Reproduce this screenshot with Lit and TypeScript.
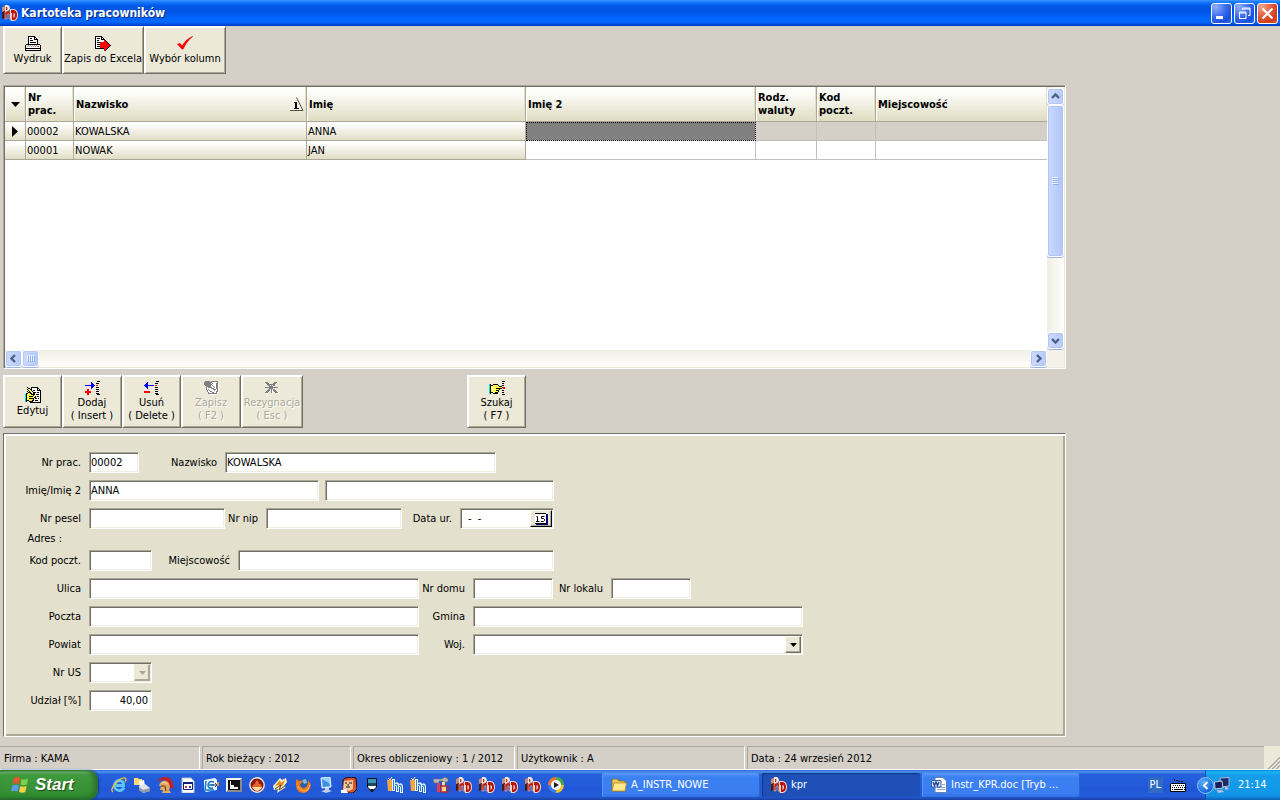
import { LitElement, html, svg, css, TemplateResult } from "lit";
import { customElement } from "lit/decorators.js";
import { classMap } from "lit/directives/class-map.js";

const PALETTE: Record<string, string> = {
  k: "#000000",
  w: "#ffffff",
  r: "#ff0000",
  b: "#0000ff",
  y: "#ffff4a",
  c: "#00e5e5",
  g: "#9c9a8f",
  d: "#808080",
  n: "#000080",
};

/** Turns rows of characters into a crisp bitmap icon; a dot is transparent. */
function bitmap(rows: string[]): TemplateResult {
  const width = Math.max(...rows.map((r) => r.length));
  const cells: unknown[] = [];
  rows.forEach((row, y) => {
    let x = 0;
    while (x < row.length) {
      const ch = row[x];
      let end = x + 1;
      while (end < row.length && row[end] === ch) end++;
      if (PALETTE[ch]) {
        cells.push(svg`<rect x=${x} y=${y} width=${end - x} height="1" fill=${PALETTE[ch]}></rect>`);
      }
      x = end;
    }
  });
  return html`<svg width=${width} height=${rows.length} viewBox="0 0 ${width} ${rows.length}"
    shape-rendering="crispEdges" aria-hidden="true">${cells}</svg>`;
}

const printer = bitmap([
  "...kkkkkkk......",
  "...kwwwwwkk.....",
  "...kwkkwwkwk....",
  "...kwwwwwkkkk...",
  "...kwkkkwwwwk...",
  "...kwwwwwwwwk...",
  "...kwkkkkkkwk...",
  "...kwwwwwwwwk...",
  ".kkkkkkkkkkkkkk.",
  "kwwgwgwgwgwgwwwk",
  "kwgwgwgwgwgwgrwk",
  "kwwwwwwwwwwwwwwk",
  "kkkkkkkkkkkkkkkk",
  "kwwwwwwwwwwwwwwk",
  "kkkkkkkkkkkkkkkk",
]);

const exportIcon = bitmap([
  "kkkkkkk.........",
  "kwwwwwkk........",
  "kwkkkwkwk.......",
  "kwwwwwkkkk......",
  "kwkkwwwwwrk.....",
  "kwwwwwwwwrrk....",
  "kwkkkrrrrrrrk...",
  "kwwwwrrrrrrrrk..",
  "kwkkkrrrrrrrrrk.",
  "kwwwwrrrrrrrrrrk",
  "kwkkkrrrrrrrrrk.",
  "kwwwwrrrrrrrrk..",
  "kkkkkkkkkrrrk...",
  ".........rrk....",
  ".........rk.....",
]);

const check = html`<svg width="16" height="15" viewBox="0 0 16 15" aria-hidden="true">
  <path d="M0 8L3 7L5 9.500Q9 3 15.500 0L16 .500Q10 5 6.500 13L5 13.500Z" fill="#f00"></path>
</svg>`;

const edit = bitmap([
  "..k...kkkkkkk...",
  "...kk.kwwwwwkk..",
  "..kyykkwwwwwkwk.",
  "...kyykwkkwwkkkk",
  "..k.kyykwwwwwwwk",
  "...kkkyykkkwkkwk",
  ".kkyykkykkwwwwwk",
  "ckyyyykkkkwkkkwk",
  "ckyyyyyykywwwwwk",
  "ckyykkkkyykwkkwk",
  "ckyyyyyyykkwwwwk",
  "ckyykkkkkwkkwkwk",
  "ckyyyyyykwwwwwwk",
  "ckkkyyykkwkkkwwk",
  "ck..kkkkwwwwwwwk",
  ".....kkkkkkkkkkk",
]);

const add = bitmap([
  "............kkk",
  "......b........",
  "......bb...kkk.",
  "......bbb......",
  "bbbbbbbbbb.rr..",
  "......bbb......",
  "......bb...kkk.",
  "......b........",
  "..rr.......kkk.",
  "..rr...........",
  "rrrrrr.....kkk.",
  "rrrrrr.........",
  "..rr.......kkk.",
  "..rr........kkk",
]);

const remove = bitmap([
  "............kkk",
  "...b...........",
  "..bb.......kkk.",
  ".bbb...........",
  "bbbbbbbbbb.rr..",
  ".bbb...........",
  "..bb.......kkk.",
  "...b...........",
  "...........kkk.",
  "...............",
  "rrrrrr.....kkk.",
  "rrrrrr.........",
  "...........kkk.",
  "............kkk",
]);

const save = bitmap([
  ".ddddd.ddddddd.",
  "ddddddddwwwwwdw",
  "dddddddwdwwwddw",
  "ddddddddwwwwddw",
  ".ddddddwdwwwddw",
  "..dddddwwdwwddw",
  "..dwddddwwdwddw",
  "..dwwwwdddwwddw",
  "..dwdwwwwdddwdw",
  "...dwdwwwwdwwdw",
  "...dwwddwwwwddw",
  "....dwwwddwwdww",
  "....dddddddddw.",
  ".....wwwwwwww..",
]);

const cancel = bitmap([
  "..............",
  "dddw.....dddw.",
  ".dddw...dddw..",
  "..ddddddddw...",
  "...dd.d.ddw...",
  "....ddddw.....",
  "dddddddddddddw",
  "....ddddw.....",
  "...dd.d.ddw...",
  "..dddwdwdddw..",
  ".dddw.dw.dddw.",
  "dddw..dw..dddw",
  ".ww....w...ww.",
  "..............",
]);

const search = bitmap([
  ".............kkk",
  "................",
  ".............kk.",
  "ck..kkkkk.......",
  "ckkkyyyyyk...kk.",
  "ckyyyyyyyykkk...",
  "ckyywyyyyyyyykrr",
  "ckywyyykkkkkk.rr",
  "ckyywyyyyyk.....",
  "ckywyyykkk...kk.",
  "ckyyyyyyyk......",
  "ckkkyykkk....kk.",
  "ck..kkkkk.......",
  ".............kkk",
]);

const calendar = html`<svg width="13" height="12" viewBox="0 0 13 12" aria-hidden="true">
  <path d="M0 0H12V11H0Z" fill="#fff"></path>
  <path d="M0 .5H11M0 10.500H11" stroke="#000" fill="none"></path>
  <path d="M11 1H13V12H1V11H11Z" fill="#000080"></path>
  <path d="M1.500 3.500H2.500V8.500M1 8.500H4.500M9.500 3.500H6.500V5.500H8.500L9.500 6.500V7.500L8.500 8.500H6" fill="none" stroke="#000"></path>
</svg>`;

const sortMark = html`<svg width="15" height="15" viewBox="0 0 15 15" aria-hidden="true">
  <path d="M1 13L7 1L8 1L14 13Z" fill="#f2f0e4"></path>
  <path d="M1 12.500L7 .5" stroke="#fff" fill="none"></path>
  <path d="M7.500 .5L14 13.500H1" stroke="#55534a" fill="none"></path>
  <path d="M5 5.500H8M5 11.500H10" stroke="#000" fill="none"></path><path d="M7 5V11" stroke="#000" stroke-width="2"></path>
</svg>`;

const app = html`<svg width="16" height="16" viewBox="0 0 16 16" aria-hidden="true">
  <path d="M0 2L3 1V12L0 13Z" fill="#c98f80"></path>
  <path d="M0 7L3 6V13L0 14Z" fill="#4d1712"></path>
  <path d="M3 0H6Q8 1 8 4L5 7H3Z" fill="#f8e8e2"></path>
  <path d="M4 2H5Q6 3 5 5H4Z" fill="#a82c20"></path>
  <path d="M3 7Q7 4 9 7V14H7V9Q6 8 5 10V14H3Z" fill="#b8241a" stroke="#efc8bc" stroke-width=".6"></path>
  <path d="M8 4H12Q16 5 16 10Q16 15 12 16H9L8 13V8Z" fill="#f3d4ca"></path>
  <path d="M9 5H12Q15 6 15 10Q15 14 12 15H10V8H9Z" fill="#b5150c"></path>
  <path d="M11.500 8Q13 8 13 10Q13 12.500 11.500 13Z" fill="#f6e2da"></path>
</svg>`;

const jar = html`<svg width="16" height="16" viewBox="0 0 16 16" aria-hidden="true">
  <path d="M0 3H6V14H1Z" fill="#f0a541"></path><path d="M1 1L3 3L5 0" stroke="#ffe0a0" fill="none"></path>
  <path d="M5 2H8V6Q11 4 12 7Q15 5 16 9V16H13V10L12 10V15H9V9L8 9V14H5Z" fill="#e8f4ff"></path>
  <path d="M6 3H7V13H6ZM8 7Q11 6 11 9V14H10V9Q9 8 8 8ZM12 8Q15 7 15 10V15H14V10Q13 9 12 9Z" fill="#2d83cc"></path>
</svg>`;

const ie = html`<svg width="16" height="16" viewBox="0 0 16 16" aria-hidden="true">
  <path d="M13 10.500Q11 14 7.500 13.500Q3 12.500 3.500 8Q4.500 3.500 8.500 3.500Q13 4 12.500 8.500H5" fill="none" stroke="#5cc4ff" stroke-width="2.800"></path>
  <path d="M2 15Q-1 13 4 7Q10 0 14 1Q16 2 14 5" fill="none" stroke="#f6c23a" stroke-width="1.300"></path>
</svg>`;

const outlookPrint = html`<svg width="16" height="16" viewBox="0 0 16 16" aria-hidden="true">
  <path d="M0 1H4L5 2H8V8H0Z" fill="#f9d978"></path><path d="M5 4L10 3L11 9L6 10Z" fill="#fff"></path>
  <path d="M5 9L11 7L16 11V14L9 16L5 13Z" fill="#dfe3ea"></path><path d="M5 10L9 13L16 11V14L9 16L5 13Z" fill="#8e98ab"></path>
</svg>`;

const helmet = html`<svg width="16" height="16" viewBox="0 0 16 16" aria-hidden="true">
  <path d="M0 4Q3 0 9 0Q15 1 16 7V12L12 10Q12 4 7 3Z" fill="#c8201c"></path>
  <path d="M3 6Q7 2 11 5Q14 9 12 13L14 16H5L6 13L3 13L4 9L2 9Z" fill="#e0a860"></path>
  <path d="M4 9H8L9 14" fill="none" stroke="#6a2f12"></path><path d="M5 6Q8 4 10 7" fill="none" stroke="#ffe2a8"></path>
</svg>`;

const calendarPage = html`<svg width="16" height="16" viewBox="0 0 16 16" aria-hidden="true">
  <path d="M2 1H11L14 4V16H2Z" fill="#fff" stroke="#b9bfc9"></path>
  <path d="M3.500 5.500H12.500V12.500H3.500Z" fill="#fff" stroke="#10207c"></path><path d="M3 5H13V7H3Z" fill="#10207c"></path>
  <path d="M5 9H7V11H5Z" fill="#d33"></path><path d="M9 9H11V11H9Z" fill="#33b"></path>
</svg>`;

const mailIcon = html`<svg width="16" height="16" viewBox="0 0 16 16" aria-hidden="true">
  <path d="M1 3L12 1L14 3V13L3 15L1 13Z" fill="#e8f7ff"></path>
  <path d="M11 5Q6 3 5 8Q5 12 10 11M6 8H11M3 4L2 13L11 13" fill="none" stroke="#1577c9" stroke-width="1.500"></path>
  <path d="M8 8H14L12 6M14 8L12 10" fill="none" stroke="#274a8c"></path><path d="M14 5H16V9H14Z" fill="#e78e3a"></path>
</svg>`;

const blackSquare = html`<svg width="16" height="16" viewBox="0 0 16 16" aria-hidden="true">
  <path d="M0 1H16V15H0Z" fill="#8a8a8a"></path><path d="M0 1H16L14 3H2V13L0 15Z" fill="#f4f4f4"></path>
  <path d="M2 3H14V13H2Z" fill="#101010"></path>
  <path d="M4 4H12V12H4Z" fill="#f4f4f4"></path><path d="M5 4H12V10H8V8H5Z" fill="#111"></path>
</svg>`;

const flame = html`<svg width="16" height="16" viewBox="0 0 16 16" aria-hidden="true">
  <circle cx="8" cy="8" r="7.200" fill="#8a1a1a" stroke="#f3e6e0" stroke-width="1.400"></circle>
  <path d="M3 10Q4 7 6 7Q6 5 8 3Q10 5 10 7Q12 6 13 10Q8 14 3 10Z" fill="#e8662a"></path>
  <path d="M3 10H13Q12 13 8 14Q4 13 3 10Z" fill="#ffd9a0"></path>
</svg>`;

const bolt = html`<svg width="16" height="16" viewBox="0 0 16 16" aria-hidden="true">
  <path d="M1 9L8 1L10 3L14 1L15 5L12 9L14 10L5 16L6 12L2 13Z" fill="#ffeebd"></path>
  <path d="M3 9L8 3L9 6L13 3L11 8L8 10L7 8Z" fill="#e88418"></path>
  <path d="M3 12L9 8L7 13L13 9" fill="none" stroke="#60401c"></path>
</svg>`;

const firefox = html`<svg width="16" height="16" viewBox="0 0 16 16" aria-hidden="true">
  <circle cx="9" cy="7" r="6" fill="#2c5ea8"></circle><path d="M7 3L11 2L12 6L9 7Z" fill="#7db8e8"></path>
  <path d="M1 2L4 4Q6 3 8 5L5 7Q5 11 9 11Q13 11 13 3Q17 7 15 11Q13 16 8 16Q1 15 1 8Z" fill="#ee7a1c"></path>
  <path d="M3 9Q5 14 10 14Q14 13 15 8" fill="none" stroke="#ffc04a"></path>
</svg>`;

const monitor = html`<svg width="16" height="16" viewBox="0 0 16 16" aria-hidden="true">
  <path d="M3 1L12 0L13 10L4 11Z" fill="#8fd2ff" stroke="#e2f1fb"></path>
  <path d="M4 2L11 6L12 9L5 10Z" fill="#3e8ee2"></path><path d="M7 11H11V13L14 14L8 16L3 14L7 13Z" fill="#c9cfe2"></path>
</svg>`;

const face = html`<svg width="16" height="16" viewBox="0 0 16 16" aria-hidden="true">
  <path d="M2 3Q5 -1 15 1L16 12L12 16H0L2 12Z" fill="#d8522a" stroke="#1a0d08"></path>
  <path d="M3 4L12 3L12 12L8 14L2 12Z" fill="#f4c69c"></path>
  <path d="M4 6H6M8 6H11M5 10H9M7 7V9" stroke="#111"></path>
  <path d="M0 13L5 12L7 16H0Z" fill="#fff"></path>
</svg>`;

const penTip = html`<svg width="16" height="16" viewBox="0 0 16 16" aria-hidden="true">
  <path d="M3.500 1.500H12.500V10L8 15L3.500 10Z" fill="#fff" stroke="#06101c"></path><path d="M4 2H12V9H4Z" fill="#3c95b4"></path>
  <path d="M4 6H12V9H4Z" fill="#174a5c"></path><path d="M6 12H10L8 15Z" fill="#111"></path>
</svg>`;

const tools = html`<svg width="16" height="16" viewBox="0 0 16 16" aria-hidden="true">
  <path d="M0 2H9L12 0L15 2V5H10V4H6V6H1Z" fill="#b8b8b8" stroke="#666" stroke-width=".6"></path>
  <path d="M4 6H7V15H4Z" fill="#d6405c"></path><path d="M9 5H12V9H13V15H8V9H9Z" fill="#ffd58a"></path>
  <path d="M8 9H15V15H8Z" fill="none" stroke="#b1283a" stroke-width="1.500"></path>
</svg>`;

const player = html`<svg width="16" height="16" viewBox="0 0 16 16" aria-hidden="true">
  <path d="M8 8V0A8 8 0 0 0 0 8Z" fill="#e9772c"></path><path d="M8 8V0A8 8 0 0 1 16 8Z" fill="#52a83e"></path>
  <path d="M8 8H0A8 8 0 0 0 8 16Z" fill="#3a7be0"></path><path d="M8 8H16A8 8 0 0 1 8 16Z" fill="#f2c230"></path>
  <circle cx="8" cy="8" r="5" fill="#f5f8fb"></circle><path d="M6 5L11 8L6 11Z" fill="#222"></path>
</svg>`;

const folder = html`<svg width="16" height="16" viewBox="0 0 16 16" aria-hidden="true">
  <path d="M1 3L2 2H6L8 4H14V14H1Z" fill="#f0c752" stroke="#8b6a1c" stroke-width=".8"></path>
  <path d="M1 14L3 6H15.500L14 14Z" fill="#ffe88c" stroke="#b08a26" stroke-width=".8"></path>
</svg>`;

const wordDoc = html`<svg width="16" height="16" viewBox="0 0 16 16" aria-hidden="true">
  <path d="M4 .5H12L15.500 4V15.500H4Z" fill="#fff" stroke="#5f7fb4"></path>
  <path d="M6 12.500H14M6 10.500H14M11 7.500H14" stroke="#8fa6cf"></path>
  <path d="M.5 3.500H10V10H.5Z" fill="#dbe6f8" stroke="#3a5fa8"></path>
  <path d="M2 5L3.500 8.500L5 5L6.500 8.500L8 5" fill="none" stroke="#1f3f92" stroke-width="1.300"></path>
</svg>`;

const windowsFlag = html`<svg width="19" height="18" viewBox="0 0 19 18" aria-hidden="true">
  <path d="M3 2Q6 0 9 2L8 8Q5 6.500 1.500 8Z" fill="#e8562c"></path><path d="M10.500 3Q13 4.500 17 2.500L16 8.500Q12.500 10 9.500 8.500Z" fill="#7fd04a"></path>
  <path d="M1.500 9.500Q5 8 8 9.500L6.500 15.500Q3.500 14 0 15.500Z" fill="#5b9bf0"></path><path d="M9.300 10Q12 11.500 15.600 10L14.300 16Q11 17.500 8 16Z" fill="#fbd046"></path>
</svg>`;

const keyboard = html`<svg width="17" height="16" viewBox="0 0 17 16" aria-hidden="true">
  <path d="M4.500 2V3.500H8.500V4.500H12.500V6" fill="none" stroke="#000" stroke-dasharray="2 1"></path>
  <path d="M1.500 6.500H15.500V14.500H.5V7Z" fill="#fff" stroke="#000"></path>
  <path d="M3 8.500H15M2 10.500H15M2 12.500H5M12 12.500H15" stroke="#000" stroke-dasharray="1 1"></path><path d="M5 12.500H12" stroke="#000"></path>
</svg>`;

const network = html`<svg width="16" height="16" viewBox="0 0 16 16" aria-hidden="true">
  <path d="M6 1L15 .5V9L7 10Z" fill="#1d2a6c" stroke="#aeb8d8"></path>
  <path d="M.5 5L8 4L9 11L1 12Z" fill="#16205c" stroke="#c6cde6"></path>
  <path d="M3 13H8L10 15L4 16ZM11 10H13L15 12L11 13Z" fill="#b9bede"></path>
</svg>`;

const QUICK_LAUNCH: [string, TemplateResult][] = [
  ["Internet Explorer", ie], ["Drukarki", outlookPrint], ["Rome", helmet], ["Kalendarz", calendarPage],
  ["Poczta", mailIcon], ["Edytor", blackSquare], ["Nagrywanie", flame], ["Winamp", bolt],
  ["Firefox", firefox], ["Pulpit", monitor], ["Irfan", face], ["Pióro", penTip],
  ["Magazyn", jar], ["Magazyn 2", jar], ["Narzędzia", tools], ["Kadry", app],
  ["Kadry 2", app], ["Kadry 3", app], ["Kadry 4", app], ["Media Player", player],
];

const chevron = (dir: "up" | "down" | "left" | "right") => {
  const paths = { up: "M1 6L4.500 2.500L8 6", down: "M1 3L4.500 6.500L8 3", left: "M6 1L2.500 4.500L6 8", right: "M3 1L6.500 4.500L3 8" };
  return html`<svg width="9" height="9" viewBox="0 0 9 9" aria-hidden="true">
    <path d=${paths[dir]} fill="none" stroke="#4d6185" stroke-width="2.400"></path></svg>`;
};

const base = css`
  :host { box-sizing: border-box; }
  *, *::before, *::after { box-sizing: border-box; }
  svg { display: block; flex: none; }
  button, input, select { font: inherit; color: inherit; margin: 0; padding: 0; border-radius: 0; }
`;

@customElement("tool-button")
class ToolButton extends LitElement {
  static properties = { lines: { attribute: false }, icon: { attribute: false }, disabled: { type: Boolean } };
  declare lines: string[];
  declare icon: TemplateResult;
  declare disabled: boolean;

  static styles = [base, css`
    :host { display: flex; }
    .btn {
      flex: 1;
      display: flex;
      flex-direction: column;
      align-items: center;
      justify-content: center;
      gap: 1px;
      background: #ece9d8;
      border: 1px solid;
      border-color: #fff #716f64 #716f64 #fff;
      box-shadow: inset 1px 1px 0 #fff, inset -1px -1px 0 #aca899;
      line-height: 13px;
      white-space: nowrap;
    }
    .btn:disabled { color: #aca899; text-shadow: 1px 1px 0 #fff; }
    .line { display: block; }
  `];

  render() {
    return html`<button class="btn" type="button" ?disabled=${this.disabled}>
      ${this.icon}
      <span>${this.lines.map((l) => html`<span class="line">${l}</span>`)}</span>
    </button>`;
  }
}

@customElement("staff-grid")
class StaffGrid extends LitElement {
  private rows = [
    ["00002", "KOWALSKA", "ANNA", "", "", "", ""],
    ["00001", "NOWAK", "JAN", "", "", "", ""],
  ];

  static styles = [base, css`
    :host {
      display: grid;
      grid-template: minmax(0, 1fr) 17px / minmax(0, 1fr) 17px;
      background: #fff;
      border: 1px solid;
      border-color: #aca899 #fff #fff #aca899;
      box-shadow: inset 1px 1px 0 #716f64, inset -1px -1px 0 #ece9d8;
      padding: 1px;
    }
    .view { overflow: hidden; }
    table { width: 100%; table-layout: fixed; border-collapse: separate; border-spacing: 0; }
    th, td { padding: 0 2px; text-align: left; white-space: nowrap; overflow: hidden; }
    th {
      height: 35px;
      font-weight: bold;
      line-height: 13px;
      background: linear-gradient(#fff, #fafaf5 25%, #dfdcc0);
      border-right: 1px solid #aca899;
      border-bottom: 1px solid #aca899;
      box-shadow: inset 1px 0 0 #fff, inset -1px 0 0 #e3dfc8;
      white-space: pre-line;
    }
    td { height: 19px; padding: 1px 1px 0; line-height: 14px; border-right: 1px solid #c0c0c0; border-bottom: 1px solid #c0c0c0; }
    td.fixed { background: linear-gradient(#fff, #faf9f4 25%, #e1dec6); border-color: #aca899; }
    tr.current td.open { background: #d4d0c8; }
    tr.current td.focus { background: #808080; outline: 1px dotted #000; outline-offset: -1px; }
    th:last-child, td:last-child { border-right: 0; }
    .c-mark { width: 21px; }
    .c-no { width: 48px; }
    .c-name { width: 233px; }
    .c-first { width: 219px; }
    .c-second { width: 230px; }
    .c-cur { width: 61px; }
    .c-zip { width: 59px; }
    .mark svg { margin: 0 auto; }
    .sorted { display: flex; align-items: center; justify-content: space-between; }
    .bar { display: flex; background: linear-gradient(90deg, #f0eee4, #fefefb); }
    .bar.v { flex-direction: column; padding: 1px 0; }
    .bar.h { background: linear-gradient(#f0eee4, #fefefb); }
    .step, .thumb {
      flex: none;
      display: flex;
      align-items: center;
      justify-content: center;
      border: 1px solid #fff;
      border-radius: 3px;
      background: linear-gradient(90deg, #cbdafd, #b6cbf9);
      box-shadow: inset 0 0 0 1px #b3c6f3, 0 1px 0 #9db5e4;
    }
    .step { width: 17px; height: 17px; }
    .v .thumb { height: 152px; background: linear-gradient(90deg, #c9d8fd, #bbcdfb 60%, #b0c5f8); }
    .h .thumb { width: 17px; height: 17px; }
    .space { flex: 1; }
    .corner { background: #f4f2e8; }
  `];

  render() {
    return html`
      <div class="view">
        <table>
          <colgroup>
            <col class="c-mark"><col class="c-no"><col class="c-name"><col class="c-first">
            <col class="c-second"><col class="c-cur"><col class="c-zip"><col>
          </colgroup>
          <thead>
            <tr>
              <th class="mark"><svg width="9" height="5" viewBox="0 0 9 5" aria-hidden="true"><path d="M0 0H9L4.500 5Z"></path></svg></th>
              <th>Nr<br>prac.</th>
              <th><div class="sorted">Nazwisko ${sortMark}</div></th>
              <th>Imię</th>
              <th>Imię 2</th>
              <th>Rodz.<br>waluty</th>
              <th>Kod<br>poczt.</th>
              <th>Miejscowość</th>
            </tr>
          </thead>
          <tbody>
            ${this.rows.map((row, r) => html`
              <tr class=${classMap({ current: r === 0 })}>
                <td class="fixed mark">${r === 0
                  ? html`<svg width="6" height="11" viewBox="0 0 6 11" aria-hidden="true"><path d="M0 0L6 5.500L0 11Z"></path></svg>`
                  : ""}</td>
                ${row.map((cell, c) => html`<td class=${classMap({ fixed: c < 3, open: c >= 3, focus: r === 0 && c === 3 })}>${cell}</td>`)}
              </tr>`)}
          </tbody>
        </table>
      </div>
      <div class="bar v">
        <button class="step" type="button" aria-label="W górę">${chevron("up")}</button>
        <div class="thumb"><svg width="7" height="8" viewBox="0 0 7 8" aria-hidden="true"><path d="M0 .5H6M0 2.500H6M0 4.500H6M0 6.500H6" stroke="#eef4fe"></path><path d="M1 1.500H7M1 3.500H7M1 5.500H7M1 7.500H7" stroke="#8cb0f8"></path></svg></div>
        <div class="space"></div>
        <button class="step" type="button" aria-label="W dół">${chevron("down")}</button>
      </div>
      <div class="bar h">
        <button class="step" type="button" aria-label="W lewo">${chevron("left")}</button>
        <div class="thumb"><svg width="8" height="7" viewBox="0 0 8 7" aria-hidden="true"><path d="M.5 0V6M2.500 0V6M4.500 0V6M6.500 0V6" stroke="#eef4fe"></path><path d="M1.500 1V7M3.500 1V7M5.500 1V7M7.500 1V7" stroke="#8cb0f8"></path></svg></div>
        <div class="space"></div>
        <button class="step" type="button" aria-label="W prawo">${chevron("right")}</button>
      </div>
      <div class="corner"></div>`;
  }
}

@customElement("staff-form")
class StaffForm extends LitElement {
  static styles = [base, css`
    :host {
      display: block;
      background: #e3e1cd;
      border: 1px solid;
      border-color: #716f64 #fff #fff #716f64;
      box-shadow: inset 2px 2px 0 #fff, inset -2px -2px 0 #aca899;
      padding: 18px 8px 25px;
    }
    form { display: flex; flex-direction: column; gap: 7px; margin: 0; }
    .row { display: flex; align-items: center; height: 21px; }
    .tight { margin: -8px 0 -6px; }
    label, .caption { display: flex; justify-content: flex-end; flex: none; white-space: nowrap; padding-right: 8px; }
    .lead { width: 77px; }
    .caption { padding-right: 27px; }
    .gap-s { width: 41px; }
    .gap-m { width: 54px; }
    .gap-l { width: 86px; }
    .gap-d { width: 58px; }
    .box {
      display: flex;
      flex: none;
      height: 21px;
      background: #fff;
      border: 1px solid;
      border-color: #aca899 #fff #fff #aca899;
      box-shadow: inset 1px 1px 0 #716f64, inset -1px -1px 0 #f1efe2;
      padding: 1px;
    }
    .box input, .box select {
      flex: 1;
      min-width: 0;
      border: 0;
      background: none;
      padding: 0;
      outline: none;
      appearance: none;
    }
    .box .num { text-align: right; padding-right: 2px; }
    .box .date { padding-left: 6px; }
    .w-tiny { width: 50px; }
    .w-short { width: 63px; }
    .w-code { width: 80px; }
    .w-date { width: 94px; }
    .w-id { width: 136px; }
    .w-name { width: 271px; }
    .w-first { width: 230px; }
    .w-second { width: 229px; margin-left: 6px; }
    .w-town { width: 316px; }
    .w-long { width: 330px; }
    .drop {
      flex: none;
      display: flex;
      align-items: center;
      justify-content: center;
      width: 16px;
      background: #ece9d8;
      border: 1px solid;
      border-color: #fff #716f64 #716f64 #fff;
      box-shadow: inset -1px -1px 0 #aca899;
    }
    .off { border-color: #ece9d8 #aca899 #aca899 #ece9d8; }
    .cal { width: 22px; border-color: #fff #000 #000 #fff; }
  `];

  private field(id: string, label: string, labelClass: string, width: string, value = "", inputClass = "") {
    return html`<label class=${labelClass} for=${id}>${label}</label>
      <span class="box ${width}"><input id=${id} class=${inputClass} type="text" .value=${value}></span>`;
  }

  private arrow(color: string) {
    return html`<svg width="7" height="4" viewBox="0 0 7 4" aria-hidden="true"><path d="M0 0H7L3.500 4Z" fill=${color}></path></svg>`;
  }

  render() {
    return html`<form>
      <div class="row">
        ${this.field("nr", "Nr prac.", "lead", "w-tiny", "00002")}
        ${this.field("nazwisko", "Nazwisko", "gap-l", "w-name", "KOWALSKA")}
      </div>
      <div class="row">
        ${this.field("imie", "Imię/Imię 2", "lead", "w-first", "ANNA")}
        <span class="box w-second"><input type="text" aria-label="Imię 2"></span>
      </div>
      <div class="row">
        ${this.field("pesel", "Nr pesel", "lead", "w-id")}
        ${this.field("nip", "Nr nip", "gap-s", "w-id")}
        <label class="gap-d" for="data">Data ur.</label>
        <span class="box w-date">
          <input id="data" class="date" type="text" .value=${"-  -"}>
          <button class="drop cal" type="button" aria-label="Kalendarz">${calendar}</button>
        </span>
      </div>
      <div class="row tight"><span class="lead caption">Adres :</span></div>
      <div class="row">
        ${this.field("kod", "Kod poczt.", "lead", "w-short")}
        ${this.field("miejscowosc", "Miejscowość", "gap-l", "w-town")}
      </div>
      <div class="row">
        ${this.field("ulica", "Ulica", "lead", "w-long")}
        ${this.field("dom", "Nr domu", "gap-m", "w-code")}
        ${this.field("lokal", "Nr lokalu", "gap-d", "w-code")}
      </div>
      <div class="row">
        ${this.field("poczta", "Poczta", "lead", "w-long")}
        ${this.field("gmina", "Gmina", "gap-m", "w-long")}
      </div>
      <div class="row">
        ${this.field("powiat", "Powiat", "lead", "w-long")}
        <label class="gap-m" for="woj">Woj.</label>
        <span class="box w-long"><select id="woj"><option></option></select><span class="drop">${this.arrow("#000")}</span></span>
      </div>
      <div class="row">
        <label class="lead" for="us">Nr US</label>
        <span class="box w-short"><select id="us" disabled><option></option></select><span class="drop off">${this.arrow("#aca899")}</span></span>
      </div>
      <div class="row">${this.field("udzial", "Udział [%]", "lead", "w-short", "40,00", "num")}</div>
    </form>`;
  }
}

@customElement("app-root")
class AppRoot extends LitElement {
  static styles = [base, css`
    :host {
      display: flex;
      flex-direction: column;
      min-height: 100vh;
      background: #d4d0c8;
      color: #000;
      font: 11px/14px "DejaVu Sans Condensed", "DejaVu Sans", sans-serif;
      font-stretch: condensed;
    }
    .title {
      display: flex;
      align-items: center;
      gap: 3px;
      height: 26px;
      padding: 0 2px;
      color: #fff;
      background: linear-gradient(#3b95ff 0, #1a7cff 2px, #0a66f5 4px, #0055e0 7px, #0055e8 12px, #0066ff 19px, #0068ff 22px, #0052e0 24px, #0038c0);
    }
    .title h1 { flex: 1; margin: 0; font-size: 12px; line-height: 16px; font-weight: bold; text-shadow: 1px 1px 0 #0a2a7c; }
    .controls { display: flex; gap: 2px; }
    .ctl {
      display: flex;
      align-items: center;
      justify-content: center;
      width: 21px;
      height: 21px;
      border: 1px solid #fff;
      border-radius: 3px;
      background: radial-gradient(circle at 20% 15%, #8fb0f8, #3b6cee 45%, #1c50dc 75%, #1c6cf8);
    }
    .ctl.close { background: radial-gradient(circle at 20% 15%, #f0a48c, #e2573a 45%, #cf3d1a 75%, #d8622c); }
    .main { flex: 1; display: flex; flex-direction: column; padding: 0 3px 9px; }
    .tools, .actions { display: flex; }
    .tools { height: 48px; margin-bottom: 11px; }
    .actions { height: 53px; margin: 6px 0 5px; }
    .b-s { width: 59px; }
    .b-m { width: 60px; }
    .b-l { width: 62px; }
    .b-x { width: 82px; }
    .apart { margin-left: 164px; }
    staff-grid { flex: 1 1 284px; margin-right: 211px; }
    staff-form { margin-right: 211px; }
    .status { display: grid; grid-template-columns: 200px 149px 162px 228px 1fr 16px; column-gap: 2px; height: 24px; border-bottom: 1px solid #fff; }
    .cell { display: flex; align-items: center; border-top: 1px solid #aca899; border-right: 1px solid #fff; border-left: 1px solid #aca899; padding: 1px 0 0 3px; white-space: nowrap; }
    .cell:first-child { border-left: 0; padding-left: 4px; }
    .cell.last { border-right: 0; margin-right: -2px; }
    .grip { display: flex; align-items: flex-end; justify-content: flex-end; background: #ece9d8; }
    .taskbar {
      display: flex;
      align-items: stretch;
      height: 30px;
      color: #fff;
      background: linear-gradient(#3168d5 0, #4993ea 2px, #2663de 4px, #245edb 8px, #2157d7 20px, #245ddb 26px, #1941a5);
    }
    .start {
      display: flex;
      align-items: center;
      gap: 5px;
      width: 98px;
      border: 0;
      padding: 0 0 1px 11px;
      border-radius: 0 10px 10px 0;
      color: #fff;
      font: italic bold 17px/20px "Liberation Sans", sans-serif;
      text-shadow: 1px 1px 1px #1c4a18;
      background: linear-gradient(#2f7a2f 0, #6fb56d 2px, #3f9a3e 5px, #379237 20px, #2f8a30 26px, #24692a);
      box-shadow: inset -4px 0 5px #2a6e2c, 1px 0 2px #123a9c;
    }
    .quick { display: flex; align-items: center; gap: 7px; padding-left: 13px; }
    .quick button { border: 0; background: none; }
    .windows { flex: 1; display: flex; gap: 2px; padding: 3px 0 3px 38px; }
    .win {
      display: flex;
      align-items: center;
      gap: 4px;
      flex: 0 1 158px;
      padding: 0 9px;
      border: 0;
      border-radius: 2px;
      white-space: nowrap;
      background: linear-gradient(#5c9bfb 0, #3c81f3 4px, #3a7ef2 20px, #3070e0);
      box-shadow: inset 1px 0 0 #5a98fa, inset -1px 0 0 #2a62cc;
    }
    .win.active { background: #1e50b8; box-shadow: inset 1px 1px 1px #123680; }
    .lang { display: flex; align-items: center; gap: 7px; padding-right: 18px; }
    .pl { background: #316ac5; line-height: 16px; padding: 0 2px; }
    .tray {
      display: flex;
      align-items: center;
      width: 75px;
      border-left: 1px solid #0a4fae;
      background: linear-gradient(#0d7fd8 0, #1bb4f2 2px, #169ceb 5px, #119aea 18px, #1392e6 26px, #0b62b8);
    }
    .hide {
      display: flex;
      align-items: center;
      justify-content: center;
      flex: none;
      width: 17px;
      height: 17px;
      margin-left: -9px;
      border: 1px solid #8fc7ff;
      border-radius: 50%;
      background: radial-gradient(circle at 35% 30%, #5ab2ff, #1466dc 70%);
    }
    .clock { margin-left: 8px; }
  `];

  render() {
    return html`
      <header class="title">
        ${app}
        <h1>Kartoteka pracowników</h1>
        <div class="controls">
          <button class="ctl" type="button" aria-label="Minimalizuj"><svg width="13" height="13" viewBox="0 0 13 13" aria-hidden="true"><path d="M1 9H8V12H1Z" fill="#fff"></path></svg></button>
          <button class="ctl" type="button" aria-label="Przywróć"><svg width="13" height="13" viewBox="0 0 13 13" aria-hidden="true"><path d="M4.500 3V1H12V8.500H10M4 2H12M1.500 5H8V11.500H1.500ZM1 6H8" fill="none" stroke="#fff"></path></svg></button>
          <button class="ctl close" type="button" aria-label="Zamknij"><svg width="13" height="13" viewBox="0 0 13 13" aria-hidden="true"><path d="M1.500 1.500L11.500 11.500M11.500 1.500L1.500 11.500" stroke="#fff" stroke-width="2.200"></path></svg></button>
        </div>
      </header>
      <main class="main">
        <div class="tools">
          <tool-button class="b-s" .icon=${printer} .lines=${["Wydruk"]}></tool-button>
          <tool-button class="b-x" .icon=${exportIcon} .lines=${["Zapis do Excela"]}></tool-button>
          <tool-button class="b-x" .icon=${check} .lines=${["Wybór kolumn"]}></tool-button>
        </div>
        <staff-grid></staff-grid>
        <div class="actions">
          <tool-button class="b-s" .icon=${edit} .lines=${["Edytuj"]}></tool-button>
          <tool-button class="b-m" .icon=${add} .lines=${["Dodaj", "( Insert )"]}></tool-button>
          <tool-button class="b-s" .icon=${remove} .lines=${["Usuń", "( Delete )"]}></tool-button>
          <tool-button class="b-m" .icon=${save} .lines=${["Zapisz", "( F2 )"]} disabled></tool-button>
          <tool-button class="b-l" .icon=${cancel} .lines=${["Rezygnacja", "( Esc )"]} disabled></tool-button>
          <tool-button class="b-s apart" .icon=${search} .lines=${["Szukaj", "( F7 )"]}></tool-button>
        </div>
        <staff-form></staff-form>
      </main>
      <footer class="status">
        <span class="cell">Firma : KAMA</span>
        <span class="cell">Rok bieżący : 2012</span>
        <span class="cell">Okres obliczeniowy : 1 / 2012</span>
        <span class="cell">Użytkownik : A</span>
        <span class="cell last">Data : 24 wrzesień 2012</span>
        <span class="grip"><svg width="13" height="13" viewBox="0 0 13 13" aria-hidden="true"><path d="M1 13L13 1M5 13L13 5M9 13L13 9" stroke="#aca899" stroke-width="1.800"></path><path d="M0 12.500L12.500 0M4 12.500L13 3.500M8 12.500L13 7.500" stroke="#fff"></path></svg></span>
      </footer>
      <nav class="taskbar">
        <button class="start" type="button">${windowsFlag}Start</button>
        <div class="quick">${QUICK_LAUNCH.map(([name, icon]) => html`<button type="button" aria-label=${name}>${icon}</button>`)}</div>
        <div class="windows">
          <button class="win" type="button">${folder}A_INSTR_NOWE</button>
          <button class="win active" type="button">${app}kpr</button>
          <button class="win" type="button">${wordDoc}Instr_KPR.doc [Tryb ...</button>
        </div>
        <div class="lang"><span class="pl">PL</span>${keyboard}</div>
        <div class="tray">
          <button class="hide" type="button" aria-label="Pokaż ukryte ikony"><svg width="7" height="9" viewBox="0 0 7 9" aria-hidden="true"><path d="M5.500 1L2 4.500L5.500 8" fill="none" stroke="#fff" stroke-width="2"></path></svg></button>
          ${network}
          <span class="clock">21:14</span>
        </div>
      </nav>`;
  }
}
